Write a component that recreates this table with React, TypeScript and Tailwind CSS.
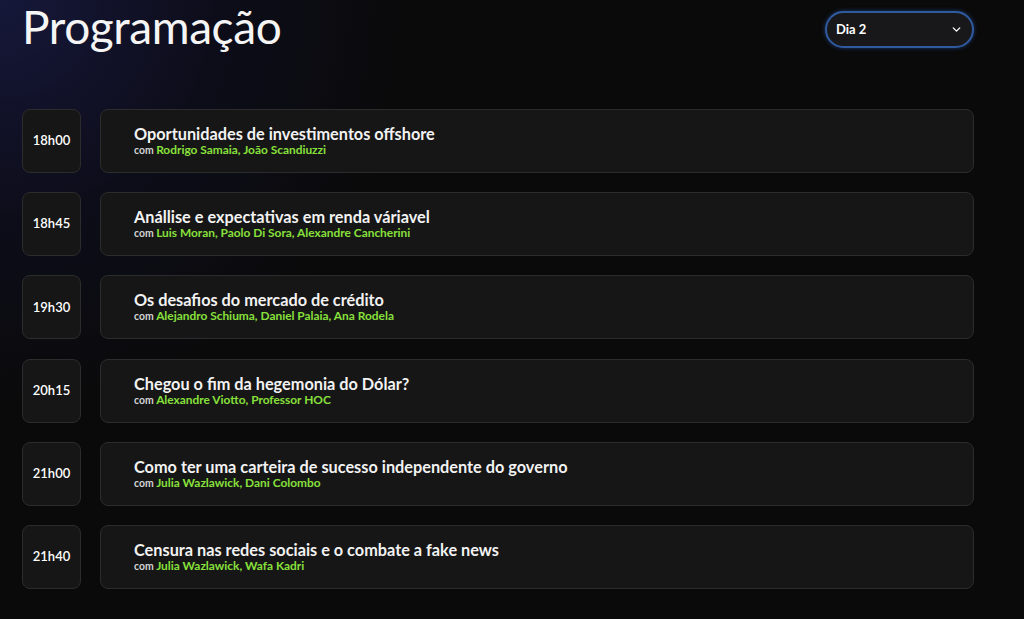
import { ChevronDown } from "lucide-react"

const sessions = [
  { time: "18h00", title: "Oportunidades de investimentos offshore", speakers: "Rodrigo Samaia, João Scandiuzzi" },
  { time: "18h45", title: "Anállise e expectativas em renda váriavel", speakers: "Luis Moran, Paolo Di Sora, Alexandre Cancherini" },
  { time: "19h30", title: "Os desafios do mercado de crédito", speakers: "Alejandro Schiuma, Daniel Palaia, Ana Rodela" },
  { time: "20h15", title: "Chegou o fim da hegemonia do Dólar?", speakers: "Alexandre Viotto, Professor HOC" },
  { time: "21h00", title: "Como ter uma carteira de sucesso independente do governo", speakers: "Julia Wazlawick, Dani Colombo" },
  { time: "21h40", title: "Censura nas redes sociais e o combate a fake news", speakers: "Julia Wazlawick, Wafa Kadri" },
]

export default function App() {
  return (
    <div className="min-h-screen h-[619px] overflow-hidden bg-[#0a0a0a] bg-[radial-gradient(circle_at_0%_0%,#16183a_0%,#0d0d1a_18%,#0a0a0a_35%)] text-white font-['Lato','Noto_Sans',sans-serif]">
      <div className="w-[952px] ml-[22px]">
        <div className="flex items-start justify-between h-[109px]">
          <h1 className="text-[46px] leading-none font-normal tracking-[-0.4px] mt-[4px] text-[#f5f5f5]">Programação</h1>
          <button className="mt-[11px] w-[149px] h-[37px] rounded-full border-2 border-[#2f5a9e] bg-[#18181b] shadow-[0_0_4px_#1e3a6e] flex items-center justify-between pl-[9px] pr-[9px] text-[13px] font-bold">
            <span>Dia 2</span>
            <ChevronDown size={13} strokeWidth={2.5} />
          </button>
        </div>

        <div className="flex flex-col gap-[19.2px]">
          {sessions.map((s) => (
            <div key={s.time} className="flex gap-[19px] h-[64px]">
              <div className="w-[59px] shrink-0 rounded-lg border border-[#2c2c2c] bg-[#161616] flex items-center justify-center text-[13px] font-semibold">
                {s.time}
              </div>
              <div className="flex-1 rounded-lg border border-[#2c2c2c] bg-[#161616] flex flex-col justify-center pl-[33px] pb-[1px]">
                <div className="text-[16.3px] font-bold leading-[19px] text-[#f2f2f2]">{s.title}</div>
                <div className="text-[10.4px] font-bold leading-[13px] text-[#d4d4d4]">
                  com <span className="text-[11.9px] text-[#88e03c]">{s.speakers}</span>
                </div>
              </div>
            </div>
          ))}
        </div>
      </div>
    </div>
  )
}
